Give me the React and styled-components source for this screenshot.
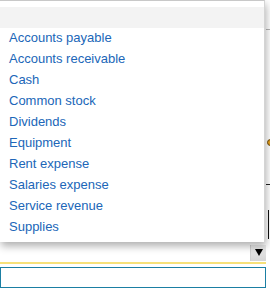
import styled, { createGlobalStyle } from "styled-components";

const accounts = [
  "Accounts payable",
  "Accounts receivable",
  "Cash",
  "Common stock",
  "Dividends",
  "Equipment",
  "Rent expense",
  "Salaries expense",
  "Service revenue",
  "Supplies",
];

const App = () => {
  return (
    <Page>
      <GlobalStyle />
      <Backdrop>
        <Behind>
          <GrayRule />
          <Dot />
          <BlackRule />
          <BlackPost />
        </Behind>
      </Backdrop>
      <SelectBox>
        <ArrowButton>
          <svg width="8" height="7" viewBox="0 0 8 7">
            <path d="M0 0 H8 L4 7 Z" fill="#000" />
          </svg>
        </ArrowButton>
      </SelectBox>
      <InputBox />
      <Menu>
        <MenuHeader />
        {accounts.map((name) => (
          <Option key={name}>{name}</Option>
        ))}
      </Menu>
    </Page>
  );
};

const GlobalStyle = createGlobalStyle`
  body {
    margin: 0;
    background: #fff;
    font-family: "Liberation Sans", Arial, sans-serif;
  }
`;
const Page = styled.div`
  position: relative;
  width: 270px;
  height: 291px;
  overflow: hidden;
`;
const Backdrop = styled.div`
  height: 243px;
  display: flex;
  justify-content: flex-end;
`;
const Behind = styled.div`
  width: 4px;
  display: flex;
  flex-direction: column;
  padding-top: 29px;
`;
const GrayRule = styled.div`
  height: 1px;
  background: #b5b5b5;
`;
const Dot = styled.div`
  width: 5px;
  height: 5px;
  margin: 109px 0 0 1px;
  border-radius: 50%;
  background: #e8a21c;
  border: 1px solid #6b4a10;
`;
const BlackRule = styled.div`
  height: 1px;
  margin-top: 38px;
  background: #222;
`;
const BlackPost = styled.div`
  width: 1px;
  height: 29px;
  margin: 25px 0 0 2px;
  background: #111;
`;
const SelectBox = styled.div`
  width: 266px;
  height: 19px;
  border-bottom: 2px solid #f7e17a;
  display: flex;
  justify-content: flex-end;
  align-items: center;
  background: #fff;
`;
const ArrowButton = styled.div`
  width: 15px;
  height: 16px;
  display: flex;
  align-items: center;
  justify-content: center;
  background: linear-gradient(#ececec, #d6d6d6);
  border-left: 1px solid #cfcfcf;
`;
const InputBox = styled.div`
  margin-top: 3px;
  width: 264px;
  height: 19px;
  border: 1px solid #1b7fa3;
`;
const Menu = styled.div`
  position: absolute;
  top: 0;
  left: 0;
  width: 265px;
  height: 242px;
  padding-top: 6px;
  box-sizing: border-box;
  background: #fff;
  border-top: 1px solid #c8c8c8;
  border-right: 1px solid #d4d4d4;
  box-shadow: 1px 4px 8px rgba(0, 0, 0, 0.32);
`;
const MenuHeader = styled.div`
  height: 21px;
  background: #f3f3f3;
`;
const Option = styled.div`
  height: 21px;
  line-height: 20px;
  padding-left: 9px;
  font-size: 13px;
  color: #2066b8;
  white-space: nowrap;
`;

export default App;
